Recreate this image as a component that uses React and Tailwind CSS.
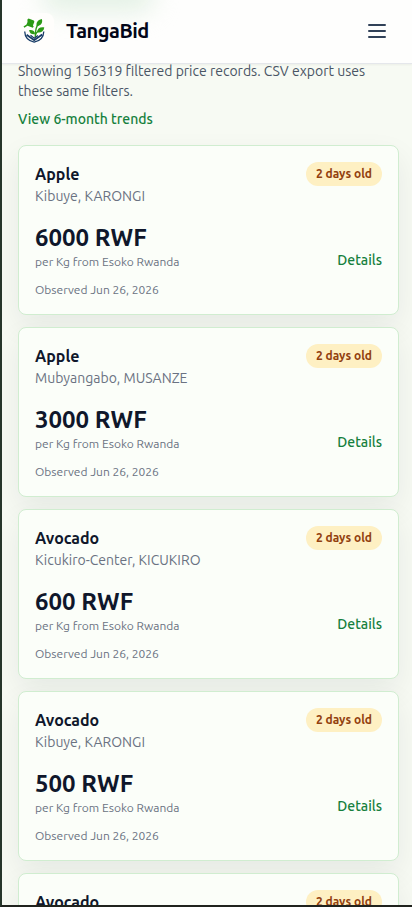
const RECORDS = [
  { product: 'Apple', place: 'Kibuye, KARONGI', price: 6000 },
  { product: 'Apple', place: 'Mubyangabo, MUSANZE', price: 3000 },
  { product: 'Avocado', place: 'Kicukiro-Center, KICUKIRO', price: 600 },
  { product: 'Avocado', place: 'Kibuye, KARONGI', price: 500 },
  { product: 'Avocado', place: 'Kicukiro-Center, KICUKIRO', price: 500 },
];

function Logo() {
  return (
    <svg viewBox="0 -1 36 36" className="h-9 w-9 rounded-lg bg-[#fffefc]">
      <g fill="#2b9a16">
        <path d="M9.400 5.600l1.200-1 5.200 1.800.6 1.400-1.500 3.800.8.8-.8 1.400-5.500-2-3 2-.9-1.300 3-2 1-2.600z" />
        <path d="M18.800 12.300c-1.100-3.500.8-6.200 5-7.300 1.300 3.800-.8 6.500-5 7.300z" />
        <path d="M19 18.400c.2-3.600 2.900-5.600 7.300-4.900-.7 3.900-3.300 5.700-7.300 4.900z" />
        <path d="M17 20.200c-3.500.5-5.600-.9-5.900-4.100 3.600-.4 5.700.9 5.900 4.100z" />
      </g>
      <path d="M21.500 8.200c-3.200 4-4.200 7-4.300 15.300M17.400 22c.2-2.800 1.700-4.400 4.200-5.800" fill="none" stroke="#2b9a16" strokeWidth="1.300" />
      <g fill="none" stroke="#183c67">
        <path d="M6.700 17.500c.2 5 3.300 9.400 9.500 10.600 6.200-1.200 9.400-5.600 9.600-10.600" strokeWidth="1.300" />
        <path d="M8.600 20.800l7.600 5.400 8-5.800" strokeWidth="1.900" />
        <path d="M12.500 21.300l3.800 3 3.600-2.800" strokeWidth="1.200" />
      </g>
    </svg>
  );
}

function MenuIcon() {
  return (
    <svg viewBox="0 0 24 24" fill="none" stroke="currentColor" strokeWidth="2" strokeLinecap="round" className="relative h-6 w-6 text-slate-700">
      <path d="M4 6h16M4 12h16M4 18h16" />
    </svg>
  );
}

function Header() {
  return (
    <header className="relative z-10 flex h-16 shrink-0 items-center justify-between overflow-hidden border-b border-gray-200 bg-[#fefefd] pb-px pl-4 pr-[23px] shadow-[0_1px_2px_rgba(0,0,0,0.05)]">
      <div className="absolute -top-6 left-10 h-9 w-28 rounded-2xl bg-[#e4f1e5] blur-md" />
      <div className="relative flex items-center gap-3">
        <Logo />
        <span className="text-xl font-semibold tracking-tight text-slate-950">TangaBid</span>
      </div>
      <MenuIcon />
    </header>
  );
}

function PriceCard({ product, place, price }) {
  return (
    <article className="rounded-lg border border-[#d0edd0] bg-[#fbfef9] p-4 shadow-[0_12px_30px_rgba(15,23,42,0.07)]">
      <div className="flex items-start justify-between">
        <div>
          <h2 className="text-base font-semibold text-slate-900">{product}</h2>
          <p className="text-sm text-gray-500">{place}</p>
        </div>
        <span className="rounded-full bg-[#fef0c3] px-2.5 py-1 text-xs font-semibold text-[#92400e]">2 days old</span>
      </div>
      <div className="mt-4 flex items-end justify-between">
        <div>
          <p className="text-2xl font-semibold text-slate-900">{price} RWF</p>
          <p className="text-xs text-gray-500">per Kg from Esoko Rwanda</p>
        </div>
        <a className="text-sm font-medium text-[#15803d]">Details</a>
      </div>
      <p className="mt-3 text-xs text-gray-500">Observed Jun 26, 2026</p>
    </article>
  );
}

export default function App() {
  return (
    <div className="h-[907px] w-[412px] overflow-hidden border-b-2 border-l-2 border-b-[#20231e] border-l-[#26352a] bg-[#f7faf3] font-['Ubuntu','Noto_Sans',sans-serif]">
      <Header />
      <main className="-mt-[3px] pl-4 pr-[13px]">
        <p className="text-sm text-gray-600">
          Showing 156319 filtered price records. CSV export uses these same filters.
        </p>
        <a className="mt-2 block text-sm font-medium text-[#15803d]">View 6-month trends</a>
        <div className="mt-4 flex flex-col gap-3">
          {RECORDS.map((record, i) => (
            <PriceCard key={i} {...record} />
          ))}
        </div>
      </main>
    </div>
  );
}
